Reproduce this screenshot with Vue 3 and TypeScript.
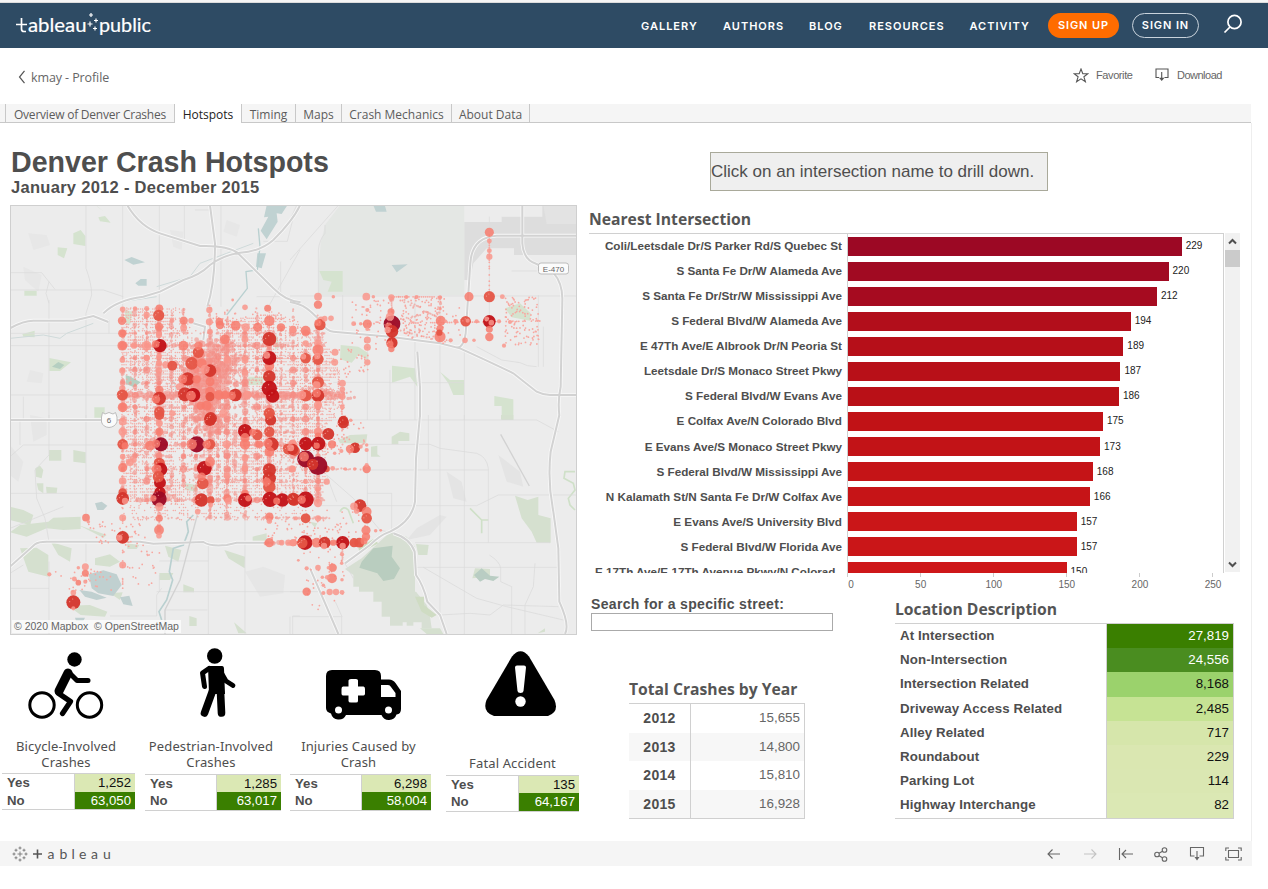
<script setup lang="ts">
interface Bar { name: string; value: number; color: string }
interface Tile { x: number; y: number }
type Dot = [number, number, number, number]

const nav = ['GALLERY', 'AUTHORS', 'BLOG', 'RESOURCES', 'ACTIVITY']
const tabs = ['Overview of Denver Crashes', 'Hotspots', 'Timing', 'Maps', 'Crash Mechanics', 'About Data']

const bars: Bar[] = [
  { name: 'Coli/Leetsdale Dr/S Parker Rd/S Quebec St', value: 229, color: '#9c0824' },
  { name: 'S Santa Fe Dr/W Alameda Ave', value: 220, color: '#a10a22' },
  { name: 'S Santa Fe Dr/Str/W Mississippi Ave', value: 212, color: '#a60b20' },
  { name: 'S Federal Blvd/W Alameda Ave', value: 194, color: '#b20e1b' },
  { name: 'E 47Th Ave/E Albrook Dr/N Peoria St', value: 189, color: '#b60f19' },
  { name: 'Leetsdale Dr/S Monaco Street Pkwy', value: 187, color: '#b81018' },
  { name: 'S Federal Blvd/W Evans Ave', value: 186, color: '#b91017' },
  { name: 'E Colfax Ave/N Colorado Blvd', value: 175, color: '#c11216' },
  { name: 'E Evans Ave/S Monaco Street Pkwy', value: 173, color: '#c21317' },
  { name: 'S Federal Blvd/W Mississippi Ave', value: 168, color: '#c51417' },
  { name: 'N Kalamath St/N Santa Fe Dr/W Colfax Ave', value: 166, color: '#c61417' },
  { name: 'E Evans Ave/S University Blvd', value: 157, color: '#ca1618' },
  { name: 'S Federal Blvd/W Florida Ave', value: 157, color: '#ca1618' },
  { name: 'E 17Th Ave/E 17Th Avenue Pkwy/N Colorad..', value: 150, color: '#ce1719' },
]
const ticks = [0, 50, 100, 150, 200, 250]

const involvement = [
  { key: 'bike', title: ['Bicycle-Involved', 'Crashes'], yes: '1,252', no: '63,050' },
  { key: 'walk', title: ['Pedestrian-Involved', 'Crashes'], yes: '1,285', no: '63,017' },
  { key: 'van', title: ['Injuries Caused by', 'Crash'], yes: '6,298', no: '58,004' },
  { key: 'fatal', title: ['Fatal Accident'], yes: '135', no: '64,167' },
]
const years = [['2012', '15,655'], ['2013', '14,800'], ['2014', '15,810'], ['2015', '16,928']]
const locations = [
  { name: 'At Intersection', value: '27,819', color: '#3a7f00', ink: '#fff' },
  { name: 'Non-Intersection', value: '24,556', color: '#4a8d20', ink: '#fff' },
  { name: 'Intersection Related', value: '8,168', color: '#9bd26c', ink: '#111' },
  { name: 'Driveway Access Related', value: '2,485', color: '#c6e394', ink: '#111' },
  { name: 'Alley Related', value: '717', color: '#d6e6ab', ink: '#111' },
  { name: 'Roundabout', value: '229', color: '#dae7b1', ink: '#111' },
  { name: 'Parking Lot', value: '114', color: '#dae7b2', ink: '#111' },
  { name: 'Highway Interchange', value: '82', color: '#dbe8b4', ink: '#111' },
]

// The map is split in four quadrants drawn at three units per pixel.
const nw: Tile = { x: 10, y: 200 }
const ne: Tile = { x: 290, y: 200 }
const sw: Tile = { x: 10, y: 415 }
const se: Tile = { x: 290, y: 415 }
const at = (t: Tile) => `translate(${t.x} ${t.y}) scale(.33333)`

const palette = ['#f9968c', '#f77b6d', '#e55546', '#d4352b', '#c21116', '#9c0824']

const nwDots: Dot[] = [
  [338,328,8,0],[336,362,12,1],[337,400,12,1],[337,437,14,1],[337,480,8,0],[337,512,9,0],[337,565,9,0],[337,585,16,2],[338,622,14,1],
  [375,325,6,0],[410,325,7,0],[410,345,9,0],[448,325,11,1],[446,346,16,2],[447,380,12,1],[447,405,9,0],[450,437,19,4],[437,432,11,1],[410,437,14,0],
  [372,437,9,0],[520,437,14,1],[565,457,16,2],[565,437,12,1],[521,362,12,1],[521,383,10,0],[543,362,8,0],[486,362,7,0],[598,330,9,0],[598,365,10,0],
  [600,395,8,0],[628,365,11,1],[630,375,12,1],[645,418,14,1],[677,377,14,1],[707,382,12,0],[743,382,13,1],[778,362,15,1],[773,325,10,1],[813,382,12,1],
  [849,388,10,1],[705,418,10,0],[778,417,20,3],[778,497,14,1],[778,474,20,4],[770,466,10,0],[778,530,18,3],[788,588,19,4],[778,565,22,4],[778,640,16,2],
  [467,494,10,0],[487,497,14,2],[545,490,18,2],[575,490,14,1],[600,512,18,3],[585,508,13,0],[533,537,19,3],[518,537,13,1],[560,538,12,1],[508,560,10,0],
  [525,583,20,3],[550,585,20,4],[543,587,14,1],[448,570,12,1],[448,595,19,3],[438,598,12,1],[448,635,15,2],[600,575,14,1],[600,590,13,2],[627,585,14,1],
  [645,585,12,1],[676,585,18,3],[665,587,12,1],[712,585,12,0],[602,655,18,3],[572,617,12,1],[590,617,14,1],[652,480,11,0],[705,480,10,0],[705,518,9,0],
  [447,470,8,0],[447,490,9,0],[447,512,9,0],[410,474,9,0],[487,640,9,0],[595,465,6,0],[668,300,4,0],[705,322,8,0],[600,545,13,1],[640,640,12,0],
]
const neDots: Dot[] = [
  [84,290,11,0],[84,314,12,1],[93,360,10,0],[90,374,16,2],[84,368,10,1],[8,388,10,0],[47,392,14,1],[47,430,9,0],[47,475,15,2],[40,470,8,0],[84,430,11,0],
  [84,450,16,1],[84,478,16,2],[82,468,9,0],[84,547,17,2],[80,555,11,0],[47,587,17,2],[36,585,12,0],[84,587,18,3],[80,580,12,1],[84,615,12,0],
  [135,457,10,0],[134,487,10,0],[157,550,10,0],[157,568,8,0],[157,590,9,0],[157,622,7,0],[229,290,11,0],[250,290,5,0],[304,292,9,0],[232,330,6,0],
  [232,372,13,1],[232,387,6,0],[232,420,10,0],[232,442,10,0],[191,371,7,0],[212,371,5,0],[303,335,10,1],[306,372,24,5],[300,350,12,0],[296,378,10,1],
  [306,394,18,3],[293,390,9,0],[306,428,16,3],[300,432,10,1],[304,447,9,1],[452,362,14,1],[450,385,10,1],[450,410,16,1],[448,398,9,2],[450,326,5,0],
  [450,292,6,0],[467,364,5,0],[497,364,7,0],[527,364,15,2],[533,362,6,0],[537,290,13,1],[598,290,16,2],[598,364,18,4],[590,357,7,0],[604,368,8,0],
  [598,388,10,1],[598,411,12,1],[598,97,13,1],[598,123,7,0],[598,152,7,0],[598,170,9,0],[637,290,7,0],[627,364,6,0],[660,366,6,0],[160,662,14,3],
  [525,421,8,0],[482,421,6,0],[552,421,5,0],[130,290,5,0],[123,355,8,0],[104,356,8,0],[642,437,6,0],[560,364,6,0],[380,291,6,0],[349,291,6,0],[232,487,9,0],
]
const swDots: Dot[] = [
  [338,20,11,0],[338,50,12,0],[338,88,15,2],[345,92,10,1],[338,125,8,0],[338,158,13,1],[338,198,11,0],[338,232,12,2],[338,250,18,3],[345,258,9,0],
  [338,308,10,0],[338,367,18,3],[328,368,9,0],[338,450,10,0],[228,308,11,1],[235,320,5,0],[226,455,10,0],[226,475,10,1],[226,500,6,0],[205,503,8,1],[205,458,5,0],[193,492,7,0],
  [190,533,8,0],[190,562,20,3],[190,580,6,0],[118,478,6,0],[448,0,14,2],[448,25,10,0],[448,50,12,1],[453,88,20,5],[420,92,14,1],[438,86,12,1],[448,145,16,2],
  [452,163,19,4],[440,163,14,1],[450,203,17,4],[445,185,16,2],[450,232,16,4],[447,252,22,5],[430,250,9,1],[448,275,12,0],[448,310,10,1],[447,345,14,1],[447,362,8,0],
  [600,15,17,3],[560,88,23,5],[545,88,15,1],[600,88,15,2],[590,88,12,1],[583,160,21,4],[600,140,14,1],[578,205,17,2],[575,185,12,1],[574,255,19,3],
  [602,255,11,2],[602,270,7,0],[652,250,12,1],[655,258,10,0],[705,235,11,1],[705,255,20,4],[715,250,9,1],[705,48,20,4],[705,68,13,1],[742,60,15,2],[728,52,10,1],[705,88,15,1],
  [705,128,10,0],[705,160,9,0],[782,15,16,3],[778,50,15,2],[778,0,12,2],[785,88,20,3],[774,85,13,1],[778,110,14,1],[778,165,19,3],[778,190,19,3],[778,215,18,2],[770,200,12,1],
  [780,253,22,4],[817,255,19,4],[800,258,10,1],[852,255,17,2],[778,305,12,1],[778,318,8,0],[778,383,13,1],[835,102,16,2],[855,108,14,2],[848,85,10,1],[845,162,10,0],
  [815,383,8,0],[835,383,9,0],[850,383,10,1],[563,290,8,0],[360,142,11,0],[372,135,8,0],[748,88,11,1],[650,88,12,0],[650,182,9,0],
]
const seDots: Dot[] = [
  [160,23,16,3],[182,16,5,0],[115,57,17,3],[84,50,12,0],[84,62,9,1],[47,86,19,4],[8,86,12,0],[85,86,20,4],[80,92,9,1],[126,88,12,1],[8,103,16,3],[2,98,10,0],
  [195,98,15,3],[180,102,12,1],[230,90,5,0],[230,105,6,0],[110,162,9,2],[47,132,24,5],[84,152,27,5],[68,148,16,3],[42,125,14,1],[230,162,12,1],[230,150,6,0],[128,160,7,0],
  [166,162,5,0],[194,162,5,0],[110,200,9,0],[84,222,8,0],[47,200,7,0],[10,252,18,3],[47,254,23,4],[35,254,12,1],[8,162,10,0],[84,264,12,0],[47,310,14,2],[84,310,9,0],[18,310,6,0],
  [210,272,18,3],[192,274,11,0],[200,288,8,0],[230,290,14,1],[230,310,15,2],[228,346,13,1],[228,365,12,1],[45,383,21,4],[37,384,15,2],[80,383,14,1],[104,383,17,3],[102,393,9,0],[158,383,19,4],
  [158,393,9,0],[130,383,9,1],[192,383,13,2],[208,383,14,2],[222,378,10,1],[8,383,10,0],[128,458,12,1],[115,458,5,0],[126,490,14,1],[112,487,7,0],[84,458,8,0],[50,460,6,0],[155,445,5,0],
  [50,530,12,1],[119,531,9,0],[138,531,9,0],[156,532,7,0],[100,534,6,0],[156,418,6,0],[156,494,5,0],[100,511,5,0],[257,347,5,0],[272,346,4,0],[134,115,5,0],[154,108,6,0],[212,95,6,0],[25,436,4,0],[97,487,5,0],
]
const dotLayers = [
  { tile: nw, dots: nwDots }, { tile: ne, dots: neDots }, { tile: sw, dots: swDots }, { tile: se, dots: seDots },
]

let seed = 20122015
function rnd(): number {
  seed = (seed * 1664525 + 1013904223) % 4294967296
  return seed / 4294967296
}

const city: [number, number][] = [
  [121,307],[183,307],[196,330],[193,345],[203,350],[222,332],[222,322],[272,312],[300,322],[303,332],[320,330],[330,350],[343,378],
  [345,410],[326,425],[326,482],[318,508],[300,520],[120,520],
]
function inCity(x: number, y: number): boolean {
  let hit = false
  for (let i = 0, j = city.length - 1; i < city.length; j = i++) {
    const [xi, yi] = city[i]
    const [xj, yj] = city[j]
    if (yi > y !== yj > y && x < ((xj - xi) * (y - yi)) / (yj - yi) + xi) hit = !hit
  }
  return hit
}
const dot = (x: number, y: number) => `M${x.toFixed(1)} ${y.toFixed(1)}h0`

// Side streets: rows and columns of single-crash addresses.
function sideStreets(): string {
  let d = ''
  for (let y = 309; y < 520; y += 3.1) {
    for (let x = 122; x < 346; x += 2.05) {
      const density = Math.sin(x / 17) * Math.cos(y / 21) > 0.5 ? 0.3 : 0.7
      if (inCity(x, y) && rnd() < (y > 500 ? 0.28 : density)) d += dot(x, y)
    }
  }
  for (let x = 122.7; x < 346; x += 4.07) {
    for (let y = 308; y < 520; y += 2.3) {
      if (inCity(x, y) && rnd() < (y > 500 ? 0.12 : 0.36)) d += dot(x, y)
    }
  }
  return d
}

// Corridor marks vary in size, so each one goes to a random width bucket.
const buckets = [
  { w: 2.1, d: '' }, { w: 3.3, d: '' }, { w: 4.8, d: '' }, { w: 6.6, d: '' },
]
function mixed(x1: number, y1: number, x2: number, y2: number, p: number, top: number): void {
  const len = Math.hypot(x2 - x1, y2 - y1)
  for (let s = 0; s < len; s += 2) {
    if (rnd() > p) continue
    const b = Math.floor(Math.pow(rnd(), 1.6) * (top + 1))
    const j = (rnd() - 0.5) * 1.2
    buckets[b].d += dot(x1 + ((x2 - x1) * s) / len + j, y1 + ((y2 - y1) * s) / len + j)
  }
}
function corridor(x1: number, y1: number, x2: number, y2: number, p: number): string {
  const len = Math.hypot(x2 - x1, y2 - y1)
  let d = ''
  for (let s = 0; s < len; s += 2.1) {
    if (rnd() < p) d += dot(x1 + ((x2 - x1) * s) / len, y1 + ((y2 - y1) * s) / len)
  }
  return d
}
function scatter(x1: number, y1: number, x2: number, y2: number, n: number): string {
  let d = ''
  for (let i = 0; i < n; i++) d += dot(x1 + rnd() * (x2 - x1), y1 + rnd() * (y2 - y1))
  return d
}
// Bell-shaped cloud, used for the downtown core.
function cloud(cx: number, cy: number, sx: number, sy: number, n: number, top: number): void {
  for (let i = 0; i < n; i++) {
    const x = cx + (rnd() + rnd() + rnd() - 1.5) * sx
    const y = cy + (rnd() + rnd() + rnd() - 1.5) * sy
    buckets[Math.floor(rnd() * (top + 1))].d += dot(x, y)
  }
}

const fine = sideStreets()
const sparse = [
  scatter(505, 296, 539, 345, 105), scatter(400, 298, 439, 338, 110), scatter(205, 312, 300, 332, 50),
  scatter(88, 522, 146, 545, 42), scatter(50, 568, 112, 592, 32), scatter(122, 545, 160, 586, 26),
  scatter(265, 520, 345, 545, 60), scatter(300, 545, 345, 612, 34), scatter(352, 300, 392, 350, 42),
  scatter(355, 355, 370, 372, 16), scatter(318, 418, 366, 455, 40), scatter(326, 500, 366, 545, 22),
  scatter(336, 392, 346, 440, 14), scatter(330, 345, 352, 378, 18), scatter(440, 297, 462, 345, 20),
  corridor(489.3, 235, 489.3, 290, 0.8), corridor(122.7, 500, 122.7, 600, 0.5), corridor(355, 324, 540, 321, 0.6),
  corridor(390, 296.8, 442, 296.8, 0.9), corridor(342, 395, 342, 440, 0.5),
].join('')

for (const x of [122.7, 135, 146.7, 171.5, 183.5, 257, 281, 293]) mixed(x, 309, x, 500, 0.5, x > 185 ? 1 : 2)
for (const x of [196, 218, 235, 305.7]) mixed(x, 350, x, 502, 0.55, 2)
for (const x of [210, 227, 245]) mixed(x, 335, x, 518, 0.95, 3)
for (const x of [159, 269, 318]) mixed(x, 325, x, 505, 0.95, 3)
for (const y of [333, 358, 370, 383, 407, 419, 432, 456, 469, 481]) mixed(122, y, 325, y, 0.4, 1)
for (const y of [345.5, 444.5, 500]) mixed(122, y, 325, y, 0.75, 2)
for (const y of [394, 396.5]) { mixed(122, y, 345, y, 0.9, 3); mixed(185, y, 300, y, 0.9, 3) }
mixed(159, 308, 159, 535, 0.9, 2)
mixed(227, 308, 227, 335, 0.6, 1)
mixed(210, 306, 210, 335, 0.8, 2)
mixed(176, 362, 205, 392, 1, 3)
mixed(195, 372, 235, 340, 1, 3)
mixed(200, 380, 240, 352, 0.8, 2)
mixed(190, 375, 226, 430, 1, 3)
mixed(125, 465, 155, 438, 0.9, 2)
mixed(265, 543, 365, 543, 0.7, 2)
mixed(265, 518, 330, 518, 0.6, 1)
mixed(122, 518, 320, 518, 0.3, 0)
mixed(391.5, 297, 391.5, 348, 1, 3)
mixed(440, 297, 440, 343, 0.6, 1)
mixed(318, 296, 318, 330, 0.3, 0)
mixed(403, 302, 440, 318, 0.5, 0)
mixed(395, 320, 440, 312, 0.6, 0)
mixed(400, 330, 435, 340, 0.5, 0)
mixed(399, 297, 425, 310, 0.6, 0)
mixed(342, 545, 342, 562, 0.9, 1)
mixed(330, 444, 366, 444, 0.6, 0)
mixed(328, 469, 366, 469, 0.4, 0)
mixed(318, 390, 343, 398, 1, 2)
cloud(208, 378, 22, 30, 330, 3)
cloud(222, 362, 20, 22, 130, 2)
cloud(205, 408, 16, 24, 160, 3)
cloud(160, 492, 12, 12, 26, 2)
cloud(325, 393, 22, 8, 80, 1)

// Crossings of arterial streets collect mid-sized marks.
const crossings: { x: number; y: number; r: number }[] = []
for (const x of [122.7, 135, 146.7, 159, 183.5, 196, 210, 218, 227, 245, 257, 269, 293, 305.7, 318]) {
  for (const y of [333, 345.5, 358, 370, 383, 395, 407, 419, 432, 444.5, 456, 469, 481, 500]) {
    if (inCity(x, y) && rnd() < 0.6) crossings.push({ x, y, r: 1.8 + rnd() * 2 })
  }
}

// Small neighbouring marks that lie over the large dark ones.
const overlaid = dotLayers
  .flatMap(l => l.dots.filter(c => c[2] > 14 && c[3] > 1).map(c => {
    const x = l.tile.x + c[0] / 3
    const y = l.tile.y + c[1] / 3
    const r = c[2] / 3
    return dot(x - r * 0.55, y - r * 0.1) + dot(x - r * 0.1, y - r * 0.5) + (rnd() > 0.5 ? dot(x - r * 0.9, y + 0.8) : '')
  }))
  .join('')
</script>

<template>
  <div class="page">
    <div class="strip"></div>
    <header class="top">
      <svg class="logo" width="136" height="30" viewBox="0 0 136 30">
        <path d="M0 12.500H11M5.500 6V17Q5.500 19.500 8 19.500H10" fill="none" stroke="#fff" stroke-width="1.700" />
        <text x="12" y="20" textLength="58.500" lengthAdjust="spacingAndGlyphs">ableau</text>
        <path d="M75 1v4M73 3h4M80 6.500v4M78 8.500h4M74 9.500v5M71.500 12h5M79 14.500v4M77 16.500h4" stroke="#fff" stroke-width="1.200" />
        <text x="83" y="20" textLength="52" lengthAdjust="spacingAndGlyphs">public</text>
      </svg>
      <nav class="nav">
        <a v-for="n in nav" :key="n" :class="n.toLowerCase()">{{ n }}</a>
        <a class="pill up">SIGN UP</a>
        <a class="pill in">SIGN IN</a>
        <svg class="search" width="20" height="20" viewBox="0 0 20 20" fill="none" stroke="#fff" stroke-width="1.700">
          <circle cx="11.500" cy="8" r="6.600" /><path d="M7 13L1.500 18.500" />
        </svg>
      </nav>
    </header>

    <div class="crumb">
      <div class="profile">
        <svg width="8" height="14" viewBox="0 0 8 14" fill="none" stroke="#555" stroke-width="1.200"><path d="M6.500 .8L1.500 7L6.500 13.200" /></svg>
        <span>kmay - Profile</span>
      </div>
      <div class="actions">
        <svg width="16" height="15" viewBox="0 0 16 15" fill="none" stroke="#555" stroke-width="1.100"><path d="M8 1L9.800 5.700H14.800L10.900 8.800L12.400 13.700L8 10.800L3.600 13.700L5.100 8.800L1.200 5.700H6.200Z" /></svg>
        <span class="fav">Favorite</span>
        <svg width="14" height="14" viewBox="0 0 14 14" fill="none" stroke="#555" stroke-width="1.100"><path d="M4 9.500H1V1H13V9.500H9.500M6.700 4V11" /><path d="M4 9.800H9.500L6.700 13Z" fill="#555" stroke="none" /></svg>
        <span class="dl">Download</span>
      </div>
    </div>

    <div class="tabs">
      <div v-for="(t, i) in tabs" :key="t" class="tab" :class="['t' + i, { active: i === 1 }]">{{ t }}</div>
    </div>

    <main class="dash">
      <section class="left">
        <h1>Denver Crash Hotspots</h1>
        <h2>January 2012 - December 2015</h2>
        <div class="map">
          <svg width="565" height="428" viewBox="11 206 565 428">
            <rect x="11" y="206" width="565" height="428" fill="#ececec" />
            <!-- land cover -->
            <g :transform="at(nw)">
              <g fill="#d5e3cf"><path d="M190 100L212 90L226 108V138L190 132ZM143 142L172 145L162 175L143 165ZM265 52L285 48L302 68L270 64ZM258 16L280 34L262 20ZM43 272H80V287H43ZM37 402L74 392V412L40 410ZM118 474L183 487L150 513H118ZM253 622H284V653H253ZM715 530H760V555H715ZM345 330L368 335L360 375L345 368ZM800 400L808 440L795 450Z" /></g>
              <g fill="#c0d2d2"><path d="M343 180L365 171L405 187L370 194ZM376 250L392 237H410V257H385ZM770 16H832L815 42L800 40L803 65L770 118L752 92L775 50L762 52ZM742 160H768L755 205L738 200Z" /></g>
              <path fill="#b5cfc1" d="M126 500L145 486L163 495L150 507ZM347 525L362 530L392 547L372 562L348 552Z" />
              <g fill="#e7e7e7"><path d="M55 100L110 105L120 135L70 150ZM40 200L95 225L85 275L45 240ZM480 90L520 95L515 150L490 140ZM650 60L690 75L680 110L640 95ZM60 510L100 520L95 550L50 545Z" /></g>
            </g>
            <g :transform="at(ne)">
              <path fill="#e4e7e4" d="M150 16H523V285H85V205L92 130L105 75Z" />
              <path fill="#dddddd" d="M523 66H635V50H757V16H858V165H672V145H590L550 190L540 240H523Z" />
              <path fill="#e3e3e3" d="M760 16H858V72H770Z" />
              <path fill="#c0d2d2" d="M250 16L285 18L290 35H258ZM305 195L353 193L320 217Z" />
              <path fill="#d5e3cf" d="M88 213H158V275H113L125 245L100 240ZM645 325L690 310L722 340L720 362L665 352ZM152 435L205 440L235 460V480L205 465L185 488L150 478ZM306 497L375 505L382 560L360 530L306 548ZM450 515L480 540H522V585H490L475 550ZM613 588L670 598V660H635V618H613Z" />
            </g>
            <g :transform="at(sw)">
              <g fill="#d5e0cf"><path d="M117 105H154V137H117ZM190 105L227 112V145L190 140ZM76 160L90 152L100 165L95 190L78 185ZM80 205L100 205V235L85 225ZM108 215L142 218L140 235H110ZM0 275L40 285L70 300L60 330L0 315ZM30 330L115 320L130 308L212 305V342L160 345L110 340L50 365L0 352ZM30 400L80 398L115 420V485L55 470ZM122 380L185 400L180 440L145 420ZM255 430L300 418L330 440L300 455L255 450ZM350 385L388 390L380 402H352ZM448 474H490L480 495H448ZM465 392L514 405L505 440L475 425ZM520 508L552 520V532H520ZM643 405L705 425L704 460L655 430ZM538 603L560 610V633H538ZM672 622L710 655H685ZM175 572L240 570L292 590L285 605L212 600ZM525 205L562 210L560 230L528 225ZM728 365L770 355V383H728ZM300 535L338 532L330 555ZM205 330L290 360L280 368Z" /></g>
              <g fill="#c0d0d0"><path d="M236 478L280 466L320 478L335 510L310 543L265 535L245 520ZM208 525L245 530L290 548L260 555L225 545ZM330 547L358 542L368 573L340 568ZM255 265L275 260L292 272L280 285H262ZM195 608H225L220 618H198Z" /></g>
              <path fill="#e6e6e6" d="M705 470L760 455L825 480L820 535L750 545ZM60 0L110 10L110 60L70 80ZM0 90L40 140L25 200L0 180Z" />
            </g>
            <g :transform="at(se)">
              <path fill="#d7dfd3" d="M165 462L215 430L300 352L350 365L375 395V530H378L410 570L420 605L425 640H395V622H370V632H350V622H338V632H300V605H275V560H250V530H207V515H190V480Z" />
              <path fill="#b9cdbf" d="M215 440L250 400L308 392L305 425L330 460L312 492L280 498L262 475L208 458Z" />
              <path fill="#cfdcc3" d="M375 545H402V570L440 600L425 608L395 590ZM205 400L250 372L265 385L210 415Z" />
              <path fill="#d5e0cf" d="M675 242L713 255L745 245V300L782 310V383H740L725 350L695 310ZM378 387L416 390L412 420H385ZM305 65L330 50L358 55V78H325V88H305ZM145 75L180 60L232 58L228 85H150ZM243 95L262 92V118L272 125H243ZM633 0H670V14H633ZM390 640H450L460 657H410ZM743 655L765 640V650ZM547 490L555 460L600 462V485ZM60 320L82 325L75 338Z" />
              <path fill="#b9cdc3" d="M552 480L575 460L600 482L628 485L610 498L585 492L570 500Z" />
              <path fill="#e4e4e4" d="M380 340L450 300L470 305L420 360L350 375ZM470 170L515 200L530 260L490 250ZM625 120L690 170L700 215L650 200Z" />
              <g fill="none" stroke="#cfe0c8" stroke-width="5"><path d="M540 280L575 315V355M575 315H595M855 170H825L822 190L850 205L855 225L835 250L840 270L855 285M150 290Q160 270 175 285L190 325" /></g>
            </g>
            <!-- local roads -->
            <g fill="none" stroke="#dadada" stroke-width="2.200">
              <g :transform="at(nw)"><path d="M228 16V205Q245 250 245 285L228 340V660M338 16V320M448 16V330M523 16V130M633 16V320M117 300V660M0 218H95L135 268M0 270H280L340 290M0 400H330M0 437H330M117 245L108 280L117 310M0 585H335M40 590V660M760 124H832L848 60M870 150L770 330M812 185V280M740 290H812M297 360V400M448 110V330M555 30H600" /></g>
              <g :transform="at(ne)"><path d="M145 16L0 180M105 75V100Q88 120 85 150V290M0 288H858M158 285V400M375 285V660M450 285V660M232 400V660M523 450V660M598 50V360M745 285V500M740 500Q710 500 690 488L635 480L560 440M300 548H520M300 510V660M760 380V500M665 213H740M130 547H300M0 60L20 16" /></g>
              <g :transform="at(sw)"><path d="M228 0V310M117 0V120L75 165L80 250L105 310L117 380M30 15V90M40 90H335M0 125L40 90M0 235H335M0 340L160 275M228 380V440M117 440V657M0 520H117M440 530H870M595 380V657M705 310V657M448 480V530M0 475L40 450M300 603H440V540L455 520M848 657V603H870M465 657V585H592M448 438H595" /></g>
              <g :transform="at(se)"><path d="M0 15H740L805 50M450 0V600M523 0V657M415 0V162M232 165H595M595 383V160Q590 125 560 115L450 100L420 88H232M305 235V350M232 235H305M90 272H560L625 240H858M375 383H780M375 457H805M598 420Q630 440 632 460V500L665 515V660M735 445L730 515L705 570V657M400 457L560 550L650 575L820 615M450 600L540 595L600 600L640 570L805 575M0 530H90M8 605H155V657M0 657V605M232 100V350M140 260L130 235L110 180L190 250L270 345L310 355M136 560L156 605M190 490L165 445" /></g>
            </g>
            <g fill="none" stroke="#b9d0d0" stroke-width="3">
              <g :transform="at(nw)"><path d="M745 85L750 140L742 210L708 215L712 265L650 345" stroke-width="4" /><path d="M440 260L540 230L570 190L650 160L730 130M340 305L440 290M0 415L100 405L150 415L170 400L250 370M480 560L490 540L500 580" stroke="#cfdada" stroke-width="3" /></g>
              <g :transform="at(sw)"><path d="M550 300L530 320L535 350L520 390L490 400L478 470L488 495L470 555L447 590L455 615" stroke-width="5" /></g>
            </g>
            <!-- highways: light casing below the grey centre line -->
            <g v-for="(w, i) in [11, 6]" :key="i" fill="none" :stroke="i ? '#d2d2d2' : '#f8f8f8'" :stroke-width="w">
              <g :transform="at(nw)"><path d="M352 16Q390 80 450 100L570 138Q650 135 682 158L790 265Q830 305 872 307M600 16L615 130Q615 250 592 320M0 385Q40 362 70 362H190L250 348L295 366M280 340Q320 300 400 290L450 275L520 240Q570 225 600 195Q640 165 690 158Q750 155 790 120Q850 60 870 16M550 370L585 380L580 420" /></g>
              <g :transform="at(ne)"><path d="M0 306C40 312 60 330 90 362Q110 395 130 395L300 410L450 430L510 445Q620 495 670 520L740 575Q760 585 780 585H858M858 107H620Q545 112 541 190L527 400Q520 445 500 442M697 16V130Q700 180 740 192L790 218Q818 250 817 300L812 560Q803 600 808 646M382 455L390 560V650" /></g>
              <g :transform="at(sw)"><path d="M0 455L75 388Q85 380 110 380H390L430 386L580 381Q600 395 650 390L680 383H778M0 15H335" /></g>
              <g :transform="at(se)"><path d="M390 0L378 130L375 260Q365 320 300 350Q270 360 240 390L165 445M310 355Q360 370 374 410L378 480Q400 510 412 560L450 600L470 657M60 460L145 657M808 0L782 110Q772 200 790 290L805 400L808 560Q840 630 825 657" /></g>
            </g>
            <g fill="none" stroke="#d2d2d2" stroke-width="4"><path :transform="at(se)" d="M632 58L718 213" /><path :transform="at(sw)" d="M562 300L510 495L465 585V657" /></g>
            <g fill="#fbfbfb" stroke="#bdbdbd" stroke-width="1">
              <rect x="538.500" y="263" width="30" height="11" rx="2.500" />
              <path d="M102.500 412.500L105 414L109 412.500L113 414L115.500 412.500L117 417V422Q115 427 109 427.500Q103 427 101.500 422V417Z" />
            </g>
            <text class="shield" x="553.500" y="271.500" text-anchor="middle">E-470</text>
            <text class="shield" x="109" y="423" text-anchor="middle">6</text>

            <!-- crash marks -->
            <g fill="none" stroke-linecap="round">
              <path :d="fine" stroke="#f3aca6" stroke-width="1.500" />
              <path :d="sparse" stroke="#f7a8a1" stroke-width="1.800" />
              <path v-for="b in buckets" :key="b.w" :d="b.d" stroke="#f38f87" stroke-width="b.w" :style="{ strokeWidth: b.w }" opacity=".6" />
            </g>
            <circle v-for="(c, i) in crossings" :key="'x' + i" :cx="c.x" :cy="c.y" :r="c.r" fill="#f58a80" opacity=".75" />
            <g v-for="(layer, i) in dotLayers" :key="'d' + i" :transform="at(layer.tile)">
              <circle v-for="(c, k) in layer.dots" :key="k" :cx="c[0]" :cy="c[1]" :r="c[2] * 1.05" :fill="palette[c[3]]" :opacity="c[3] < 2 ? .85 : .95" />
            </g>
            <path :d="overlaid" fill="none" stroke="#f9aaa2" stroke-width="1.200" stroke-linecap="round" opacity=".8" />
          </svg>
          <span class="credit">© 2020 Mapbox&nbsp; © OpenStreetMap</span>
        </div>

        <div class="cards">
          <div v-for="c in involvement" :key="c.key" class="card" :class="c.key">
            <div class="pic">
              <svg v-if="c.key === 'bike'" width="76" height="68" viewBox="0 0 76 68">
                <g fill="none" stroke="#000" stroke-width="3"><circle cx="14" cy="53" r="12.200" /><circle cx="61.500" cy="53" r="12.200" /></g>
                <circle cx="46.500" cy="7.500" r="7.200" />
                <path d="M40.500 20L49 28.500H60" fill="none" stroke="#000" stroke-width="5" stroke-linecap="round" stroke-linejoin="round" />
                <path d="M40 21L31 39" stroke="#000" stroke-width="9" stroke-linecap="round" />
                <path d="M30 41L42.500 49.500L34.500 61.500" fill="none" stroke="#000" stroke-width="5.200" stroke-linecap="round" stroke-linejoin="round" />
              </svg>
              <svg v-else-if="c.key === 'walk'" width="38" height="70" viewBox="0 0 38 70">
                <circle cx="15.700" cy="8" r="7.700" />
                <path d="M9 18H23Q25 18 25 21L26 46H10Z" />
                <g fill="none" stroke="#000" stroke-linecap="round" stroke-linejoin="round"><path d="M10 20.500L3.500 25L5.500 38.500" stroke-width="5" /><path d="M23 26L27 33L34 37.500" stroke-width="4.800" /><path d="M13.500 43L5.500 65M21.500 44L22.500 65" stroke-width="7.600" /></g>
              </svg>
              <svg v-else-if="c.key === 'van'" width="76" height="50" viewBox="0 0 76 50">
                <path d="M6 0H49Q55 0 55 6V9.500H63Q67 9.500 69.500 13L75 21V39Q75 44 70.500 44.500A8 8 0 0 1 55.500 45H20A8 8 0 0 1 5 43.500Q0 42 0 38V6Q0 0 6 0Z" />
                <path d="M22.500 10.500Q22.500 9 25 9H30Q32 9 32 10.500V16.500H37.500Q39 16.500 39 19V23.500Q39 25.500 37.500 25.500H32V31Q32 32.500 30 32.500H25Q22.500 32.500 22.500 31V25.500H17Q15.500 25.500 15.500 23.500V19Q15.500 16.500 17 16.500H22.500ZM55 15H62Q64 15 65 17L69.500 23V27H55Z" fill="#fff" />
                <circle cx="12.500" cy="40" r="3.500" fill="#fff" /><circle cx="62.500" cy="40" r="3.500" fill="#fff" />
              </svg>
              <svg v-else width="72" height="66" viewBox="0 0 72 66">
                <path d="M27 5.500Q35.500 -5 44 5.500L69.500 49Q74.500 61 63 65H9Q-3 61 1.500 49Z" />
                <path d="M30 16.500Q30 14.500 32 14.500H39Q41 14.500 41 16.500L38.500 40Q38.300 42 35.500 42Q32.800 42 32.500 40Z" fill="#fff" /><circle cx="35.500" cy="50.500" r="5.200" fill="#fff" />
              </svg>
            </div>
            <div class="ctitle"><div v-for="l in c.title" :key="l">{{ l }}</div></div>
            <div class="yn">
              <b>Yes</b><span class="yes">{{ c.yes }}</span>
              <b>No</b><span class="no">{{ c.no }}</span>
            </div>
          </div>
        </div>
      </section>

      <section class="right">
        <div class="hint">Click on an intersection name to drill down.</div>
        <h3 class="ni">Nearest Intersection</h3>
        <div class="chart">
          <div class="rows">
            <div v-for="b in bars" :key="b.name" class="row">
              <span class="name">{{ b.name }}</span>
              <span class="plot"><i :style="{ width: b.value * 1.457 + 'px', background: b.color }"></i><em>{{ b.value }}</em></span>
            </div>
          </div>
          <div class="scroll">
            <svg width="15" height="16" viewBox="0 0 15 16" fill="none" stroke="#505050" stroke-width="2"><path d="M4 10.500L7.500 7L11 10.500" /></svg>
            <div class="thumb"></div>
            <svg class="down" width="15" height="15" viewBox="0 0 15 15" fill="none" stroke="#505050" stroke-width="2"><path d="M4 5.500L7.500 9L11 5.500" /></svg>
          </div>
        </div>
        <div class="axis"><span v-for="t in ticks" :key="t" :class="{ zero: t === 0 }">{{ t }}</span></div>

        <div class="lower">
          <div class="lcol">
            <div class="slabel">Search for a specific street:</div>
            <input class="sinput" type="text" />
            <h3 class="ty">Total Crashes by Year</h3>
            <div class="years">
              <div v-for="y in years" :key="y[0]"><b>{{ y[0] }}</b><span>{{ y[1] }}</span></div>
            </div>
          </div>
          <div class="rcol">
            <h3 class="ld">Location Description</h3>
            <div class="locs">
              <div v-for="l in locations" :key="l.name"><b>{{ l.name }}</b><span :style="{ background: l.color, color: l.ink }">{{ l.value }}</span></div>
            </div>
          </div>
        </div>
      </section>
    </main>

    <footer class="foot">
      <svg width="16" height="16" viewBox="0 0 16 16" stroke="#777" stroke-width=".9" fill="none">
        <path d="M8 5.500v5M5.500 8h5M8 .5v3M6.500 2h3M8 12.500v3M6.500 14h3M2 6.500v3M.5 8h3M14 6.500v3M12.500 8h3M4 2.700v3M2.500 4.200h3M12 2.700v3M10.500 4.200h3M4 10.300v3M2.500 11.800h3M12 10.300v3M10.500 11.800h3" />
      </svg>
      <svg class="word" width="80" height="20" viewBox="0 0 80 20">
        <path d="M0 10H9M4.500 5.500V14.500" stroke="#555" stroke-width="1.600" />
        <text x="14.500" y="14.500">a</text><text x="26.500" y="14.500">b</text><text x="38.500" y="14.500">l</text><text x="46" y="14.500">e</text><text x="58" y="14.500">a</text><text x="70" y="14.500">u</text>
      </svg>
      <div class="tools">
        <svg width="16" height="16" viewBox="0 0 16 16"><path d="M2 8H14M6.500 3.500L2 8L6.500 12.500" /></svg>
        <svg class="dim" width="16" height="16" viewBox="0 0 16 16"><path d="M2 8H14M9.500 3.500L14 8L9.500 12.500" /></svg>
        <svg width="16" height="16" viewBox="0 0 16 16"><path d="M1.500 2V14M4 8H15M8 4L4 8L8 12" /></svg>
        <svg width="16" height="16" viewBox="0 0 16 16"><circle cx="4" cy="8.500" r="2.300" /><circle cx="11.500" cy="4" r="2.300" /><circle cx="11.500" cy="13" r="2.300" /><path d="M6 7.300L9.500 5.200M6 9.700L9.500 11.800" /></svg>
        <svg width="16" height="16" viewBox="0 0 16 16"><path d="M5.500 10H1.500V1.500H14.500V10H10.500M8 5V11.500" /><path d="M5.500 11H10.500L8 14.500Z" class="solid" /></svg>
        <svg width="17" height="16" viewBox="0 0 17 16"><path d="M3.500 4.500H13.500V11.500H3.500ZM.8 5V2H4M13 2H16.200V5M16.200 11V14H13M4 14H.8V11" /></svg>
      </div>
    </footer>
  </div>
</template>

<style>
html, body { margin: 0; background: #fff; overflow: hidden; }
</style>

<style scoped>
.page { width: 1268px; height: 889px; overflow: hidden; display: flex; flex-direction: column; font-family: "Liberation Sans", Arial, sans-serif; color: #4e4e4e; background: #fff; }
.strip { height: 3px; box-sizing: border-box; background: #f5f5f5; border-bottom: 1px solid #dcdcdc; flex: none; }
.top { height: 45px; background: #2e4b64; display: flex; justify-content: space-between; flex: none; }
.logo { margin: 9px 0 0 16px; }
.logo text { font: 400 20px "Lato", sans-serif; fill: #fff; stroke: #fff; stroke-width: .2px; }
.nav { display: flex; align-items: flex-start; color: #fff; font: 600 11px/16px "Inter", sans-serif; letter-spacing: 1px; }
.nav a { margin-top: 15px; white-space: nowrap; box-sizing: border-box; }
.gallery { width: 82px; } .authors { width: 86px; } .blog { width: 60px; } .resources { width: 100.500px; } .activity { width: 78.500px; }
.nav .pill { height: 25px; margin-top: 10px; border-radius: 13px; line-height: 25px; text-align: center; letter-spacing: .9px; }
.nav .up { width: 71px; background: #ff6c00; }
.nav .in { width: 67px; margin-left: 13px; border: 1px solid #c9d3dc; line-height: 23px; }
.search { margin: 11px 25px 0 24px; }

.crumb { height: 56px; flex: none; display: flex; justify-content: space-between; color: #666; font-family: "Open Sans", sans-serif; }
.profile { display: flex; margin: 20px 0 0 18px; font-size: 12.500px; line-height: 19px; letter-spacing: -.1px; }
.profile svg { margin: 2px 5px 0 0; }
.actions { display: flex; margin: 20px 46px 0 0; font: 11px/15px "Liberation Sans", sans-serif; }
.fav { width: 36px; margin: 0 23px 0 7px; letter-spacing: -.4px; white-space: nowrap; }
.dl { width: 45px; margin-left: 8px; letter-spacing: -.5px; white-space: nowrap; }

.tabs { width: 1251px; height: 19px; box-sizing: border-box; background: #f5f5f5; border-bottom: 1px solid #c8c8c8; display: flex; padding-left: 5px; flex: none; font: 12px/19px "Open Sans", sans-serif; color: #5c5c5c; }
.tab { box-sizing: border-box; height: 18px; padding-top: .5px; border-left: 1px solid #c8c8c8; text-align: center; white-space: nowrap; }
.tab.active { background: #fff; color: #222; height: 19px; }
.t0 { width: 169px; letter-spacing: -.22px; } .t1 { width: 67px; } .t2 { width: 54px; } .t3 { width: 46px; } .t4 { width: 110px; } .t5 { width: 79px; border-right: 1px solid #c8c8c8; }

.dash { height: 718px; width: 1252px; box-sizing: border-box; border-right: 1px solid #eee; flex: none; display: flex; }
.left { width: 589px; flex: none; }
h1, h2, h3 { margin: 0; color: #4e4e4e; white-space: nowrap; }
h1 { font-size: 28.600px; line-height: 34px; margin: 22px 0 0 11px; }
h2 { font-size: 16.500px; line-height: 17px; margin: 0 0 9px 11px; letter-spacing: .290px; }
.map { position: relative; width: 565px; height: 428px; margin-left: 10px; border: 1px solid #cfcfcf; overflow: hidden; }
.map svg { display: block; }
.credit { position: absolute; left: 1px; bottom: 1px; background: rgba(255,255,255,.7); font-size: 10.500px; line-height: 13px; padding: 0 2px; color: #666; white-space: nowrap; }
.shield { font: 400 8px "Liberation Sans", sans-serif; fill: #666; }

.cards { display: grid; grid-template-columns: 134px 137px 142px 134px; column-gap: 9px; padding-left: 2px; }
.card { display: flex; flex-direction: column; }
.card.bike { width: 133px; } .card.walk { width: 136px; }
.card.van { margin-left: -1px; width: 141px; } .card.fatal { margin-left: 4px; width: 133px; }
.pic { height: 103px; }
.pic svg { display: block; }
.bike .pic svg { margin: 17px 0 0 26px; }
.walk .pic svg { margin: 13px 0 0 54px; }
.van .pic svg { margin: 35px 0 0 36px; }
.fatal .pic svg { margin: 16px 0 0 39px; }
.ctitle { height: 34.500px; padding-top: .5px; margin-top: .5px; margin-left: -4px; text-align: center; font: 13px/15.500px "Noto Sans", sans-serif; letter-spacing: .13px; color: #4e4e4e; white-space: nowrap; box-sizing: border-box; }
.bike .ctitle { margin-left: -5px; }
.fatal .ctitle { padding-top: 17px; margin-left: 0; }
.yn { display: grid; grid-template-columns: 1fr 60px; grid-template-rows: 17.500px 17.500px; border-top: 1px solid #d0d0d0; border-bottom: 1px solid #d0d0d0; font-size: 13.200px; line-height: 18px; }
.van .yn { margin-top: .5px; } .walk .yn { margin-top: .5px; } .fatal .yn { margin-top: 1.500px; }
.yn b { padding-left: 5px; border-right: 1px solid #d0d0d0; }
.walk .yn { grid-template-columns: 1fr 64px; } .van .yn { grid-template-columns: 1fr 69px; }
.yn span { text-align: right; padding-right: 4px; }
.yes { background: #dbe8b4; color: #111; }
.no { background: #3a7f00; color: #fff; }

.right { width: 662px; flex: none; }
.hint { box-sizing: border-box; width: 338px; height: 39px; margin: 29px 0 0 121px; border: 1px solid #a9a99a; background: #efefef; font-size: 17px; line-height: 37px; white-space: nowrap; }
h3 { font: 700 15.700px/20px "Open Sans", sans-serif; color: #555; }
.ni { margin-top: 18px; height: 24px; }
.chart { display: flex; height: 340px; }
.rows { width: 634px; border-top: 1px solid #d0d0d0; border-right: 1px solid #d0d0d0; height: 339px; overflow: hidden; }
.row { display: flex; height: 25.070px; }
.name { width: 253px; padding-right: 5px; text-align: right; font: 700 11.700px/24px "Liberation Sans", sans-serif; white-space: nowrap; border-right: 1px solid #d0d0d0; flex: none; }
.plot { display: flex; align-items: center; height: 24px; }
.plot i { height: 19px; }
.plot em { font: 10px/24px "Liberation Sans", sans-serif; color: #222; margin-left: 4px; }
.scroll { width: 15px; height: 339px; margin: 0 0 0 1px; background: #f1f1f1; display: flex; flex-direction: column; }
.thumb { height: 17px; margin-top: 1px; background: #cbcbcb; }
.down { margin-top: auto; }
.axis { display: flex; margin-left: 222px; height: 24px; }
.axis span { width: 73.100px; box-sizing: border-box; text-align: center; font-size: 10px; line-height: 13px; padding-top: 5px; color: #666; background: linear-gradient(#ccc, #ccc) 36px 0 / 1px 4px no-repeat; }
.axis .zero { padding-left: 7px; }
.lower { display: flex; }
.lcol { width: 306px; }
.slabel { font: 700 14px/16px "Liberation Sans", sans-serif; letter-spacing: .330px; margin: -1px 0 0 2px; white-space: nowrap; }
.sinput { display: block; box-sizing: border-box; width: 242px; height: 18px; margin: 1px 0 0 2px; border: 1px solid #aaa; padding: 0; }
.ty { margin: 48px 0 0 40px; height: 24px; }
.years { width: 175px; margin-left: 40px; border-top: 1px solid #d0d0d0; border-bottom: 1px solid #d0d0d0; border-right: 1px solid #d0d0d0; font-size: 14px; line-height: 28.600px; }
.years div { display: flex; height: 28.600px; }
.years div:nth-child(even) { background: #f7f7f7; }
.years b { width: 61px; text-align: center; border-right: 1px solid #d0d0d0; letter-spacing: .3px; }
.years span { flex: 1; text-align: right; padding-right: 4px; font-size: 13.400px; color: #666; }
.ld { margin-top: 2px; height: 24px; }
.locs { width: 339px; box-sizing: border-box; border: 1px solid #d0d0d0; border-left: 0; font-size: 13.300px; line-height: 24.200px; }
.locs div { display: flex; height: 24.200px; }
.locs b { width: 206px; padding-left: 5px; border-right: 1px solid #d0d0d0; white-space: nowrap; letter-spacing: .1px; }
.locs span { flex: 1; text-align: right; padding-right: 4px; }

.foot { width: 1252px; height: 25px; background: #f5f5f5; display: flex; align-items: center; flex: none; }
.foot > svg:first-child { margin-left: 12px; }
.word { margin-left: 5px; }
.word text { font: 14px "Lato", sans-serif; fill: #555; }
.tools { display: flex; gap: 19.800px; margin: 0 10px 0 auto; }
.tools svg { fill: none; stroke: #666; stroke-width: 1.1; }
.tools .dim { stroke: #c4c4c4; }
.tools .solid { fill: #666; stroke: none; }
</style>
